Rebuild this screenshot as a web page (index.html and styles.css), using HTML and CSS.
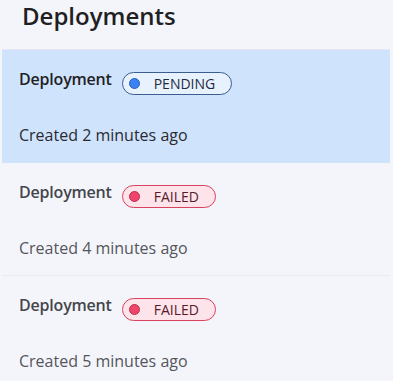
FILE: index.html
```html
<!DOCTYPE html>
<html lang="en">

<head>
  <meta charset="UTF-8">
  <meta name="viewport" content="width=device-width, initial-scale=1.0">
  <title>Deployments</title>
  <link rel="stylesheet" href="styles.css">
</head>

<body>
  <h1 class="title">Deployments</h1>
  <ul class="list">
    <li class="item selected">
      <div class="head">
        <span class="name">Deployment</span>
        <span class="badge pending"><i class="dot"></i>PENDING</span>
      </div>
      <div class="meta">Created 2 minutes ago</div>
    </li>
    <li class="item">
      <div class="head">
        <span class="name">Deployment</span>
        <span class="badge failed"><i class="dot"></i>FAILED</span>
      </div>
      <div class="meta">Created 4 minutes ago</div>
    </li>
    <li class="item">
      <div class="head">
        <span class="name">Deployment</span>
        <span class="badge failed"><i class="dot"></i>FAILED</span>
      </div>
      <div class="meta">Created 5 minutes ago</div>
    </li>
  </ul>
</body>

</html>
```
FILE: styles.css
```css
body {
  margin: 0;
  background-color: #f4f5fa;
  font-family: "Open Sans", "Noto Sans", sans-serif;
  color: #1f1f24;
}

.title {
  margin: 0;
  padding: 0 0 0 22px;
  height: 49px;
  box-sizing: border-box;
  font-size: 24px;
  font-weight: 600;
  line-height: 32px;
}

.list {
  list-style: none;
  margin: 0 3px 0 2px;
  padding: 0;
  border-top: 1px solid #e6e6f3;
}

.item {
  height: 113px;
  box-sizing: border-box;
  padding: 19px 17px 0;
  border-bottom: 1px solid #e9e9f4;
}

.item.selected {
  background-color: #cfe3fd;
  border-bottom-color: #cfe3fd;
}

.head {
  display: flex;
  align-items: flex-start;
  gap: 10px;
}

.name {
  font-size: 16px;
  font-weight: 600;
  line-height: 20px;
  letter-spacing: -0.2px;
  color: #45454c;
}

.selected .name {
  color: #1f1f24;
}

.badge {
  display: inline-flex;
  align-items: center;
  margin-top: 3px;
  height: 23px;
  box-sizing: border-box;
  padding: 0 16px 0 6px;
  border-radius: 12px;
  font-size: 14px;
}

.badge .dot {
  width: 11px;
  height: 11px;
  border-radius: 50%;
  margin-right: 14px;
  box-sizing: border-box;
}

.badge.pending {
  background-color: #e8f1fe;
  border: 1px solid #3b5d8f;
  color: #1f2a3d;
}

.badge.pending .dot {
  background-color: #3b82f6;
  border: 1px solid #2a5fb5;
}

.badge.failed {
  background-color: #fde4ea;
  border: 1px solid #d9415e;
  color: #5a1a2a;
}

.badge.failed .dot {
  background-color: #f0456a;
  border: 1px solid #c22a4b;
}

.meta {
  margin-top: 30px;
  font-size: 16px;
  line-height: 20px;
  color: #55555c;
}

.selected .meta {
  color: #2a2a30;
}
```
